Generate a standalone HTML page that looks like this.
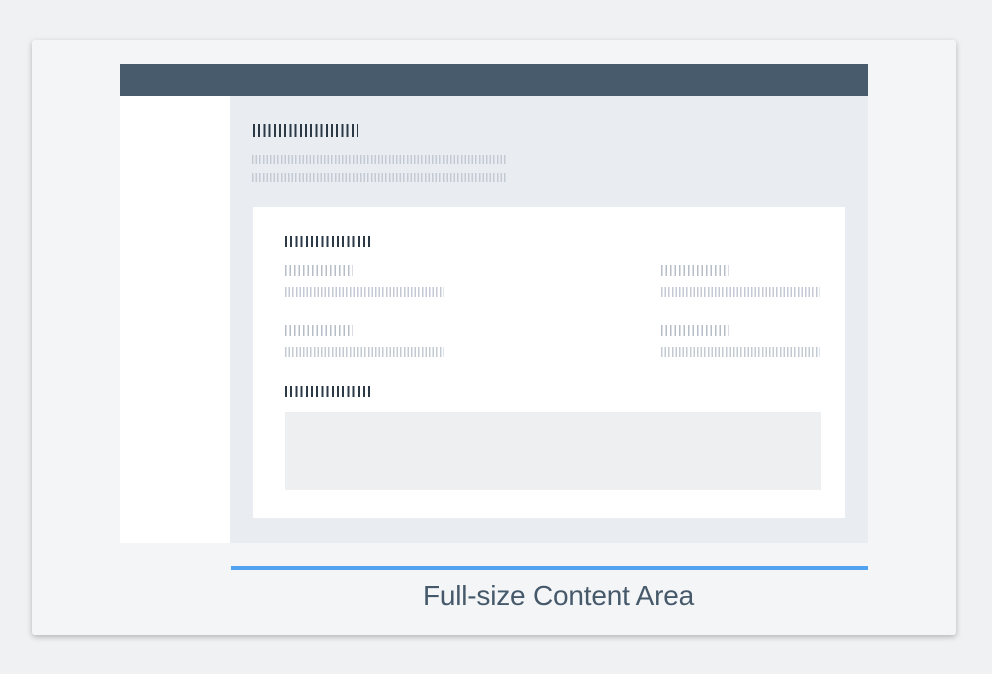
<!DOCTYPE html>
<html><head><style>
body{margin:0;width:992px;height:674px;background:#f0f1f3;position:relative;overflow:hidden;font-family:"Liberation Sans",sans-serif}
div{position:absolute}
.card{left:32px;top:40px;width:924px;height:595px;background:#f4f5f7;border-radius:3px;box-shadow:0 2px 6px rgba(0,0,0,.25)}
.dk{background:repeating-linear-gradient(90deg,#2c3a48 0 2px,transparent 2px 5.2px)}
.lt{background:repeating-linear-gradient(90deg,#c3cad3 0 1.5px,transparent 1.5px 3.6px)}
.lt2{background:repeating-linear-gradient(90deg,#b5bdc7 0 1.5px,transparent 1.5px 4.5px)}
</style></head><body>
<div class="card"></div>
<div style="left:120px;top:64px;width:748px;height:32px;background:#475b6c"></div>
<div style="left:120px;top:96px;width:110px;height:447px;background:#fff"></div>
<div style="left:230px;top:96px;width:638px;height:447px;background:#e9edf2"></div>
<div class="dk" style="left:253px;top:124px;width:105px;height:13px"></div>
<div class="lt" style="left:252px;top:155px;width:254px;height:9px"></div>
<div class="lt" style="left:252px;top:173px;width:254px;height:9px"></div>
<div style="left:253px;top:207px;width:592px;height:311px;background:#fff"></div>
<div class="dk" style="left:285px;top:236px;width:85px;height:11px"></div>
<div class="lt2" style="left:285px;top:265px;width:68px;height:11px"></div>
<div class="lt" style="left:285px;top:287px;width:159px;height:10px"></div>
<div class="lt2" style="left:661px;top:265px;width:68px;height:11px"></div>
<div class="lt" style="left:661px;top:287px;width:159px;height:10px"></div>
<div class="lt2" style="left:285px;top:325px;width:68px;height:11px"></div>
<div class="lt" style="left:285px;top:347px;width:159px;height:10px"></div>
<div class="lt2" style="left:661px;top:325px;width:68px;height:11px"></div>
<div class="lt" style="left:661px;top:347px;width:159px;height:10px"></div>
<div class="dk" style="left:285px;top:386px;width:85px;height:11px"></div>
<div style="left:285px;top:412px;width:536px;height:78px;background:#eeeff1"></div>
<div style="left:231px;top:566px;width:637px;height:4px;background:#4fa3f0"></div>
<div style="left:240px;top:578px;width:637px;text-align:center;font-size:28px;color:#46596b;line-height:36px;letter-spacing:-0.2px">Full-size Content Area</div>
</body></html>
